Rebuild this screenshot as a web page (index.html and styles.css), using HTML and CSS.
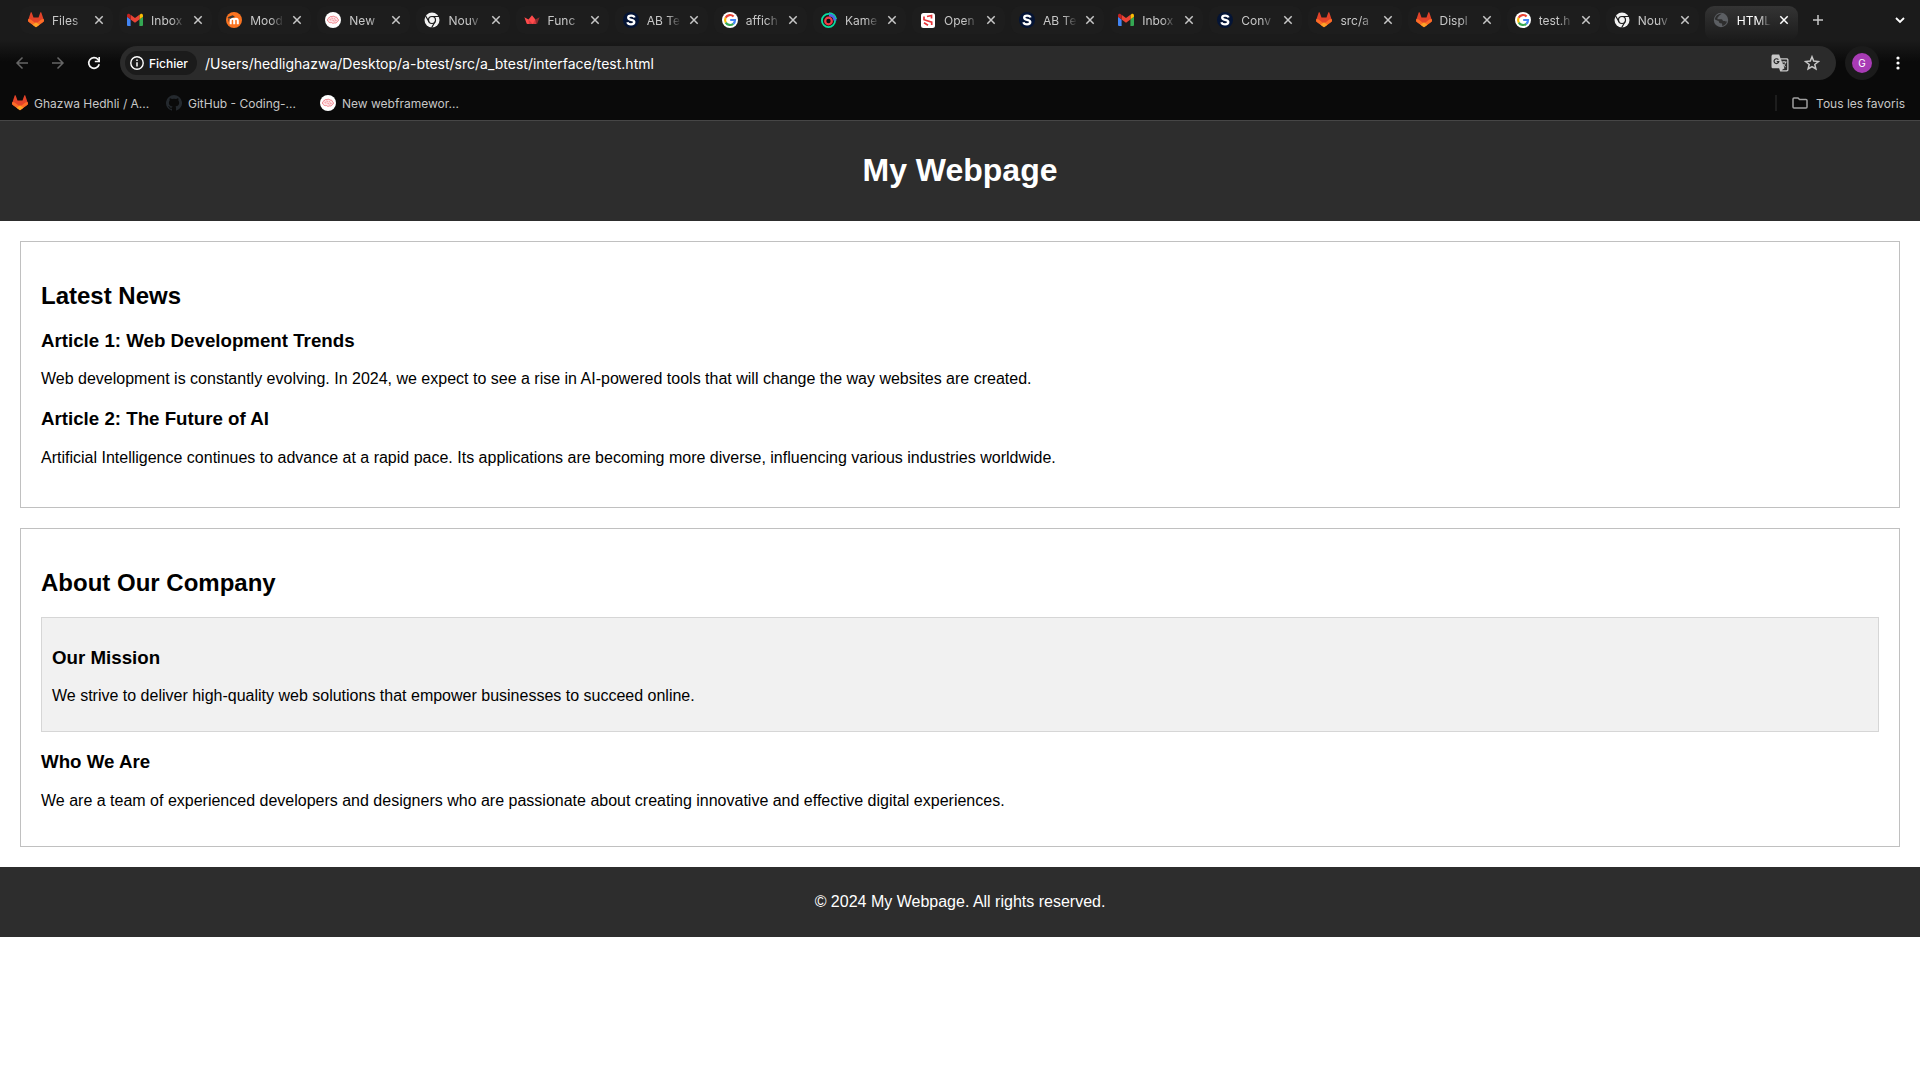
FILE: index.html
```
<!DOCTYPE html>
<html lang="fr">
<head>
<meta charset="utf-8">
<title>HTML</title>
<link rel="stylesheet" href="styles.css">
</head>
<body>
<svg class="sprite" aria-hidden="true">
  <symbol id="gitlab" viewBox="0 0 16 16"><path fill="#e24329" d="M8 15.3.5 9.7a1.4 1.4 0 0 1-.4-1.5L2.7.6c.2-.5.8-.5 1 0L5.500 5.600h5L12.300.6c.2-.5.8-.5 1 0l2.600 7.600a1.400 1.400 0 0 1-.4 1.500z"/><path fill="#fc6d26" d="M8 15.300.5 9.700C0 9.300-.1 8.600.1 8l.3-.9C2 7 3.300 8 4.600 9L8 11.600 11.400 9c1.300-1 2.600-2 4.200-1.900l.3.9c.2.600.1 1.300-.4 1.700z"/><path fill="#fca326" d="m8 15.300-3.400-2.500L8 10.300l3.400 2.500z"/></symbol>
  <symbol id="gmail" viewBox="0 0 16 16"><path fill="#4285f4" d="M1 14h2.600V7.400L0 4.700V13a1 1 0 0 0 1 1z"/><path fill="#34a853" d="M12.400 14H15a1 1 0 0 0 1-1V4.700l-3.600 2.700z"/><path fill="#fbbc04" d="M12.400 3v4.400L16 4.700V3.600c0-1.500-1.600-2.200-2.700-1.400z"/><path fill="#ea4335" d="M3.600 7.400V2.700L8 6l4.400-3.300v4.700L8 10.700z"/><path fill="#c5221f" d="M0 3.600v1.100l3.600 2.700V3l-.9-.8C1.600 1.400 0 2.100 0 3.600z"/></symbol>
  <symbol id="moodle" viewBox="0 0 16 16"><circle cx="8" cy="8" r="8" fill="#fa7320"/><path fill="none" stroke="#fff" stroke-width="2" d="M4.700 12.200V8.700c0-2.600 3.500-2.600 3.500 0v3.500m0-3.500c0-2.600 3.600-2.600 3.600 0v3.500"/><path fill="#333" d="m1.500 5.300 5.200-2 2.100 1.400-4.500 2z"/><path fill="none" stroke="#333" stroke-width=".6" d="M2.700 5.500v4"/></symbol>
  <symbol id="brain" viewBox="0 0 16 16"><circle cx="8" cy="8" r="8" fill="#fff"/><path fill="#fde4e6" stroke="#ef7680" stroke-width=".9" d="M2.500 8c0-1.300.8-1.800 1.500-2 .5-1.500 2-1.800 3-1.400 1-.7 2.600-.3 3.200.4 1.400-.1 2.300.7 2.300 1.700 1.400.6 1.200 2.500-.2 2.900-.5 1.400-2 1.600-3 1.300-.9.600-2.300.5-2.900-.4C5 10.800 3.700 10.500 3.500 9.600c-.600-.2-1-.9-1-1.600z"/><path fill="none" stroke="#ef7680" stroke-width=".7" d="M4.500 7.300c1-.7 2 .4 1.300 1.200m1-3c-.5 1 .5 1.500 1.300 1.200m1.700-.9c-.8.7-.4 1.600.6 1.700M7.500 8.500c1-.6 2 .1 1.600 1.200m1-1 1.500-.2"/></symbol>
  <symbol id="chrome" viewBox="0 0 16 16"><circle cx="8" cy="8" r="7.500" fill="#f1f1f1"/><circle cx="8" cy="8" r="3.500" fill="#f1f1f1" stroke="#1b1b1b" stroke-width="1.200"/><path fill="none" stroke="#1b1b1b" stroke-width="1.200" d="M8 4.500h7M5 9.800 1.500 3.700M11 9.800 7.600 15.700"/></symbol>
  <symbol id="crown" viewBox="0 0 16 16"><path fill="#ff4b4b" d="m.4 5.200 4.100 2.200L8 3.300l3.400 4.100-.7 4.600H3.300c-.3 0-.6-.2-.7-.4z"/><path fill="#8c2b2e" d="m11.300 7.400 4.300-2.200-2.300 6.400c-.1.300-.4.400-.6.400h-2.200z"/><path fill="#d93b40" d="m4.500 7.400 4.200 4.600 2.700-4.600L12 12H5z"/></symbol>
  <symbol id="sletter" viewBox="0 0 16 16"><circle cx="8" cy="8" r="8" fill="#041435"/><path fill="none" stroke="#fff" stroke-width="2.300" d="M11.500 5.500C10.700 3 5.200 3 5.200 5.700c0 2.800 6.100 1.400 6.100 4.400 0 3-6.100 3.100-6.900.1"/></symbol>
  <symbol id="google" viewBox="0 0 16 16"><circle cx="8" cy="8" r="8" fill="#fff"/><g fill="none" stroke-width="2.200"><path stroke="#ea4335" d="M3.600 5.700A5 5 0 0 1 11.600 4.500"/><path stroke="#fbbc05" d="M3.800 10.600a5 5 0 0 1-.2-4.900"/><path stroke="#34a853" d="M3.800 10.600a5 5 0 0 0 7.500 1.200"/><path stroke="#4285f4" d="M11.300 11.800A4.800 4.800 0 0 0 13 8H8.200"/></g></symbol>
  <symbol id="kame" viewBox="0 0 16 16"><circle cx="7.500" cy="8.500" r="6.600" fill="none" stroke="#09dfa1" stroke-width="1.800"/><path fill="none" stroke="#5268e8" stroke-width="3.200" d="M8 2.900c3.500 0 6 2.500 6 5.600"/><path fill="none" stroke="#09dfa1" stroke-width="1.300" d="M8 .8c4 0 7 2.800 7.300 6.200"/><circle cx="7.500" cy="9" r="3.300" fill="#090e12" stroke="#f23d46" stroke-width="2.200"/></symbol>
  <symbol id="openclass" viewBox="0 0 16 16"><rect x="1" y="1" width="14" height="15" rx="2.500" fill="#fff"/><path fill="none" stroke="#e63439" stroke-width="1.700" d="M4 4.500v3.200l7.700 2.400v3M7 4.500l4.500-1v3M4 10.800l4 2.500"/></symbol>
  <symbol id="globe" viewBox="0 0 16 16"><circle cx="8" cy="8" r="7.200" fill="#5c5f63"/><path fill="#2e2e2e" d="M9 1.800c-2 .4-1.500 1.600-3 2-.8.300-.2 1.600-1.500 1.700v1.700h4c1.200 0 .8 1.700 2 1.700h1c1 0 1 1 2.500.5-.7 2.500-2.500 4.200-4.800 4.600V12.500c0-1-.5-1.300-2-1.300-1.700 0-.7-2.400-2.400-2.400L1.900 7.600C2.200 4 5 1.600 9 1.800z"/></symbol>
  <symbol id="github" viewBox="0 0 16 16"><path fill="#24292e" d="M8 0a8 8 0 0 0-2.530 15.590c.4.070.55-.17.55-.38v-1.490c-2.230.49-2.700-.95-2.700-.95-.36-.92-.89-1.170-.89-1.170-.73-.5.06-.49.06-.49.8.060 1.230.82 1.230.82.72 1.230 1.880.88 2.340.67.070-.52.28-.88.51-1.080-1.780-.2-3.640-.89-3.640-3.950 0-.87.31-1.590.82-2.150-.08-.2-.36-1.020.08-2.120 0 0 .67-.21 2.200.82a7.600 7.600 0 0 1 4 0c1.530-1.040 2.200-.82 2.200-.82.44 1.100.16 1.920.08 2.120.51.560.82 1.270.82 2.150 0 3.070-1.870 3.750-3.650 3.950.29.250.54.730.54 1.480v2.200c0 .21.15.46.55.38A8 8 0 0 0 8 0z"/></symbol>
  <symbol id="x" viewBox="0 0 10 10"><path fill="none" stroke="currentColor" stroke-width="1.500" d="m1.300 1.300 7.400 7.400m0-7.400L1.300 8.700"/></symbol>
</svg>

<div class="browser">
  <div class="tabstrip">
    <div class="tabs">
      <div class="tab"><svg class="favicon"><use href="#gitlab"/></svg><button class="tab-title">Files</button><button class="close" aria-label="Fermer"><svg><use href="#x"/></svg></button></div>
      <div class="tab"><svg class="favicon"><use href="#gmail"/></svg><button class="tab-title">Inbox</button><button class="close" aria-label="Fermer"><svg><use href="#x"/></svg></button></div>
      <div class="tab"><svg class="favicon"><use href="#moodle"/></svg><button class="tab-title">Mood</button><button class="close" aria-label="Fermer"><svg><use href="#x"/></svg></button></div>
      <div class="tab"><svg class="favicon"><use href="#brain"/></svg><button class="tab-title">New</button><button class="close" aria-label="Fermer"><svg><use href="#x"/></svg></button></div>
      <div class="tab"><svg class="favicon"><use href="#chrome"/></svg><button class="tab-title">Nouv</button><button class="close" aria-label="Fermer"><svg><use href="#x"/></svg></button></div>
      <div class="tab"><svg class="favicon"><use href="#crown"/></svg><button class="tab-title">Func</button><button class="close" aria-label="Fermer"><svg><use href="#x"/></svg></button></div>
      <div class="tab"><svg class="favicon"><use href="#sletter"/></svg><button class="tab-title">AB Te</button><button class="close" aria-label="Fermer"><svg><use href="#x"/></svg></button></div>
      <div class="tab"><svg class="favicon"><use href="#google"/></svg><button class="tab-title">affich</button><button class="close" aria-label="Fermer"><svg><use href="#x"/></svg></button></div>
      <div class="tab"><svg class="favicon"><use href="#kame"/></svg><button class="tab-title">Kame</button><button class="close" aria-label="Fermer"><svg><use href="#x"/></svg></button></div>
      <div class="tab"><svg class="favicon"><use href="#openclass"/></svg><button class="tab-title">Open</button><button class="close" aria-label="Fermer"><svg><use href="#x"/></svg></button></div>
      <div class="tab"><svg class="favicon"><use href="#sletter"/></svg><button class="tab-title">AB Te</button><button class="close" aria-label="Fermer"><svg><use href="#x"/></svg></button></div>
      <div class="tab"><svg class="favicon"><use href="#gmail"/></svg><button class="tab-title">Inbox</button><button class="close" aria-label="Fermer"><svg><use href="#x"/></svg></button></div>
      <div class="tab"><svg class="favicon"><use href="#sletter"/></svg><button class="tab-title">Conv</button><button class="close" aria-label="Fermer"><svg><use href="#x"/></svg></button></div>
      <div class="tab"><svg class="favicon"><use href="#gitlab"/></svg><button class="tab-title">src/a</button><button class="close" aria-label="Fermer"><svg><use href="#x"/></svg></button></div>
      <div class="tab"><svg class="favicon"><use href="#gitlab"/></svg><button class="tab-title">Displ</button><button class="close" aria-label="Fermer"><svg><use href="#x"/></svg></button></div>
      <div class="tab"><svg class="favicon"><use href="#google"/></svg><button class="tab-title">test.h</button><button class="close" aria-label="Fermer"><svg><use href="#x"/></svg></button></div>
      <div class="tab"><svg class="favicon"><use href="#chrome"/></svg><button class="tab-title">Nouv</button><button class="close" aria-label="Fermer"><svg><use href="#x"/></svg></button></div>
      <div class="tab active"><svg class="favicon"><use href="#globe"/></svg><button class="tab-title">HTML</button><button class="close" aria-label="Fermer"><svg><use href="#x"/></svg></button></div>
    </div>
    <div class="strip-actions">
      <button class="icon-button" aria-label="Nouvel onglet"><svg width="12" height="12" viewBox="0 0 12 12"><path fill="none" stroke="#c7c7c7" stroke-width="1.500" d="M6 1v10M1 6h10"/></svg></button>
      <button class="icon-button" aria-label="Rechercher des onglets"><svg width="10" height="10" viewBox="0 0 10 10"><path fill="none" stroke="#fff" stroke-width="1.800" d="m1 3 4 4 4-4"/></svg></button>
    </div>
  </div>

  <div class="toolbar">
    <nav class="history">
      <button class="icon-button" aria-label="Retour"><svg width="14" height="14" viewBox="0 0 14 14"><path fill="none" stroke="#666" stroke-width="1.500" d="M13 7H2m5.500-5.500L2 7l5.500 5.500"/></svg></button>
      <button class="icon-button" aria-label="Avancer"><svg width="14" height="14" viewBox="0 0 14 14"><path fill="none" stroke="#666" stroke-width="1.500" d="M1 7h11M6.500 1.500 12 7l-5.500 5.500"/></svg></button>
      <button class="icon-button" aria-label="Actualiser"><svg width="14" height="14" viewBox="0 0 14 14"><path fill="none" stroke="#f5f5f5" stroke-width="1.700" d="M12.200 8.300A5.300 5.300 0 1 1 11 3.400l1 1.200"/><path fill="#f5f5f5" d="M13 1v5.300H7.800V4.700h3.600V1z"/></svg></button>
    </nav>
    <form class="omnibox">
      <button type="button" class="site-chip"><svg width="14" height="14" viewBox="0 0 14 14"><circle cx="7" cy="7" r="6.200" fill="none" stroke="#fff" stroke-width="1.400"/><path stroke="#fff" stroke-width="1.500" d="M7 6.200v4.200M7 3.400v1.500"/></svg>Fichier</button>
      <input class="url" type="text" aria-label="Adresse" value="/Users/hedlighazwa/Desktop/a-btest/src/a_btest/interface/test.html">
      <button type="button" class="icon-button" aria-label="Traduire"><svg width="18" height="18" viewBox="0 0 18 18"><path fill="#c7c7c7" d="M2.200.5h6l1.300 3.700h6.300c.9 0 1.700.7 1.700 1.600v10c0 .9-.8 1.700-1.700 1.700H9.200l-1.100-3.200H2.200c-.9 0-1.700-.7-1.700-1.600V2.200C.5 1.200 1.300.5 2.200.5z"/><path fill="#2b2b2b" d="m10 5.500 3.500 8.800-2.900 2h4.800c.5 0 .8-.3.8-.8V6.300c0-.5-.3-.8-.8-.8z"/><path fill="none" stroke="#2b2b2b" stroke-width="1.200" d="M7.400 5.700A2.400 2.400 0 1 0 7.800 7.700H5.700"/><path fill="none" stroke="#c7c7c7" d="M10.600 8h5M13 7v1m1.700 0c-.4 2-1.500 3.600-3 4.700m.1-3c.7 1.400 1.600 2.400 2.900 3.100"/></svg></button>
      <button type="button" class="icon-button" aria-label="Ajouter aux favoris"><svg width="16" height="16" viewBox="0 0 16 16"><path fill="none" stroke="#c7c7c7" stroke-width="1.500" stroke-linejoin="miter" d="m8 1.800 1.700 4.300 4.700.4-3.600 3 1.100 4.500L8 11.600 4.100 14l1.100-4.500-3.600-3 4.700-.4z"/></svg></button>
    </form>
    <button class="profile"><span class="avatar">G</span></button>
    <button class="icon-button menu" aria-label="Menu"><svg width="4" height="14" viewBox="0 0 4 14"><g fill="#fff"><circle cx="2" cy="2" r="1.600"/><circle cx="2" cy="7" r="1.600"/><circle cx="2" cy="12" r="1.600"/></g></svg></button>
  </div>

  <nav class="bookmarks">
    <a class="bookmark" href="#"><svg class="favicon"><use href="#gitlab"/></svg>Ghazwa Hedhli / A...</a>
    <a class="bookmark" href="#"><svg class="favicon"><use href="#github"/></svg>GitHub - Coding-...</a>
    <a class="bookmark" href="#"><svg class="favicon"><use href="#brain"/></svg>New webframewor...</a>
    <button class="all-bookmarks"><svg width="16" height="16" viewBox="0 0 16 16"><path fill="none" stroke="#a0a0a0" stroke-width="1.500" d="M2 3h4l1.600 1.600H14c.6 0 1 .4 1 1V12c0 .6-.4 1-1 1H2c-.6 0-1-.4-1-1V4c0-.6.4-1 1-1z"/></svg>Tous les favoris</button>
  </nav>
</div>

<header class="banner"><h1>My Webpage</h1></header>
<main>
  <section class="panel">
    <h2>Latest News</h2>
    <article class="story">
      <h3>Article 1: Web Development Trends</h3>
      <p>Web development is constantly evolving. In 2024, we expect to see a rise in AI-powered tools that will change the way websites are created.</p>
    </article>
    <article class="story">
      <h3>Article 2: The Future of AI</h3>
      <p>Artificial Intelligence continues to advance at a rapid pace. Its applications are becoming more diverse, influencing various industries worldwide.</p>
    </article>
  </section>
  <section class="panel">
    <h2>About Our Company</h2>
    <div class="mission">
      <h3>Our Mission</h3>
      <p>We strive to deliver high-quality web solutions that empower businesses to succeed online.</p>
    </div>
    <div>
      <h3>Who We Are</h3>
      <p>We are a team of experienced developers and designers who are passionate about creating innovative and effective digital experiences.</p>
    </div>
  </section>
</main>
<footer class="banner"><p>© 2024 My Webpage. All rights reserved.</p></footer>
</body>
</html>
```
FILE: styles.css
```
* { box-sizing: border-box; }

body {
  margin: 0;
  background: #fff;
  color: #000;
  font-family: Arial, "Liberation Sans", sans-serif;
}

.sprite { position: absolute; width: 0; height: 0; }

/* Browser frame */
.browser {
  background: linear-gradient(#1b1b1b 40px, #0a0a0a 62px);
  border-bottom: 1px solid #464646;
  font-family: Inter, sans-serif;
  font-size: 12px;
  color: #c7c7c7;
}

.browser button {
  display: flex;
  align-items: center;
  padding: 0;
  border: 0;
  background: none;
  color: inherit;
  font: inherit;
}

.browser svg { flex: none; display: block; }

.icon-button { justify-content: center; width: 28px; height: 28px; }

.favicon { width: 16px; height: 16px; }

.tabstrip {
  display: flex;
  height: 40px;
  padding: 6px 6px 0 20px;
}

.tabs { display: flex; flex: 1; min-width: 0; }

.tab {
  display: flex;
  flex: 1 1 0;
  align-items: center;
  min-width: 0;
  height: 28px;
  margin-right: 6px;
  padding: 0 9px 0 8px;
  gap: 8px;
  border-radius: 9px;
  background: #1d1d1d;
}

.tab .tab-title {
  flex: 1;
  min-width: 0;
  overflow: hidden;
  white-space: nowrap;
  -webkit-mask-image: linear-gradient(90deg, #000 60%, transparent);
  mask-image: linear-gradient(90deg, #000 60%, transparent);
}

.close svg { width: 10px; height: 10px; }

.tab.active {
  height: 34px;
  padding-bottom: 6px;
  background: linear-gradient(#343434, #1b1b1b);
  color: #fff;
}

.strip-actions {
  display: flex;
  justify-content: space-between;
  width: 110px;
  height: 28px;
}

.toolbar {
  display: flex;
  align-items: center;
  padding: 6px 8px 0;
}

.history { display: flex; gap: 8px; margin-right: 12px; }

.omnibox {
  display: flex;
  flex: 1;
  align-items: center;
  gap: 4px;
  height: 34px;
  padding: 0 10px 0 5px;
  border-radius: 17px;
  background: #2b2b2b;
}

.browser .site-chip {
  gap: 5px;
  height: 24px;
  padding: 0 9px 0 5px;
  border-radius: 12px;
  background: #1b1b1b;
  color: #fff;
  font-weight: 500;
}

.url {
  flex: 1;
  min-width: 0;
  padding: 0 4px;
  border: 0;
  outline: 0;
  background: none;
  color: #fff;
  font: 14px Inter, sans-serif;
}

.browser .profile {
  justify-content: center;
  width: 34px;
  height: 34px;
  margin-left: 9px;
  border-radius: 50%;
  background: #1b1b1b;
}

.avatar {
  width: 20px;
  height: 20px;
  border-radius: 50%;
  background: #a83bb5;
  color: #fff;
  font-size: 10px;
  line-height: 20px;
  text-align: center;
}

.menu { margin-left: 5px; }

.bookmarks {
  display: flex;
  align-items: center;
  gap: 16px;
  height: 40px;
  padding: 6px 15px 0 12px;
}

.bookmark {
  display: flex;
  align-items: center;
  gap: 6px;
  width: 138px;
  color: inherit;
  text-decoration: none;
  white-space: nowrap;
}

.browser .all-bookmarks {
  gap: 8px;
  height: 16px;
  margin-left: auto;
  padding-left: 15px;
  border-left: 2px solid #1d1d1d;
}

/* Page */
.banner {
  padding: 10px;
  background: #2d2d2d;
  color: #fff;
  text-align: center;
}

.panel {
  margin: 20px;
  padding: 20px;
  border: 1px solid #c0c0c0;
}

.story { margin-bottom: 20px; }

.mission {
  padding: 10px;
  border: 1px solid #d6d6d6;
  background: #f1f1f1;
}
```
